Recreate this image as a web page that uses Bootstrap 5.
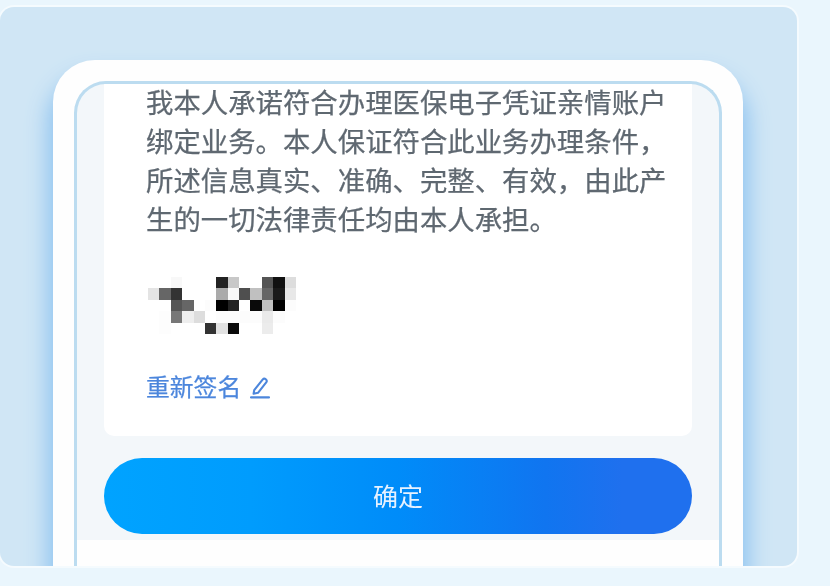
<!DOCTYPE html>
<html lang="zh-CN">
<head>
<meta charset="utf-8">
<title>确认</title>
<link rel="stylesheet" href="https://cdn.jsdelivr.net/npm/bootstrap@5.3.0/dist/css/bootstrap.min.css">
<style>
html,body{height:586px;overflow:hidden}
body{background:#eaf6fd;font-family:"Liberation Sans","Noto Sans CJK SC",sans-serif}
.stage{width:797px;height:559px;margin-top:7px;padding:53px 0 0 53px;background:#d0e6f5;border-radius:14px;overflow:hidden;box-shadow:0 0 0 2px rgba(255,255,255,.5)}
.phone{width:690px;height:506px;padding:21px 21px 0;background:#fefefe;border-radius:42px 42px 0 0;box-shadow:0 20px 22px 5px #8ec3f0}
.screen{height:485px;background:#f3f7fa;border:solid #bcdcf0;border-width:3px 3px 0;border-radius:32px 32px 0 0;overflow:hidden}
.sheet{height:352px;margin:0 27px;padding-left:42px;padding-right:21px;border-radius:0 0 10px 10px}
.pledge{font-size:27.4px;line-height:39px;color:#5f6871;margin-bottom:36.5px;filter:blur(.5px);-webkit-text-stroke:.25px #5f6871}
.sign-pad{display:block;width:148px;height:57px;margin:0 0 37px 2px}
.redo{font-size:23.8px;line-height:34px;color:#4c86dc;gap:9px;filter:blur(.45px);-webkit-text-stroke:.25px #4c86dc}
.ok-btn{height:76px;padding-top:10px;font-size:25px;color:#e6f2ff;border:0;background:linear-gradient(90deg,#00a3ff 0%,#009cfd 25%,#008cf9 50%,#1075f0 75%,#1f70ee 88%)}
.ok-btn:hover{color:#e6f2ff;background:linear-gradient(90deg,#00a3ff 0%,#009cfd 25%,#008cf9 50%,#1075f0 75%,#1f70ee 88%)}
.ok-label{display:block;filter:blur(.45px)}
.actions{padding:22px 27px 6px}
.foot{height:26px;background:#fefefe}
</style>
</head>
<body>
<div class="stage">
  <div class="phone">
    <div class="screen d-flex flex-column">
      <div class="sheet bg-white flex-shrink-0">
        <p class="pledge">我本人承诺符合办理医保电子凭证亲情账户绑定业务。本人保证符合此业务办理条件，所述信息真实、准确、完整、有效，由此产生的一切法律责任均由本人承担。</p>
        <svg class="sign-pad" viewBox="0 0 13 5" shape-rendering="crispEdges" aria-label="签名">
          <rect x="2" y="0" width="1" height="1" fill="#f8f8f8"/><rect x="6" y="0" width="1" height="1" fill="#222"/><rect x="7" y="0" width="1" height="1" fill="#c8c8c8"/><rect x="10" y="0" width="1" height="1" fill="#555"/><rect x="11" y="0" width="1" height="1" fill="#111"/><rect x="12" y="0" width="1" height="1" fill="#ddd"/>
          <rect x="0" y="1" width="1" height="1" fill="#e4e4e4"/><rect x="1" y="1" width="1" height="1" fill="#666"/><rect x="2" y="1" width="1" height="1" fill="#333"/><rect x="6" y="1" width="1" height="1" fill="#aaa"/><rect x="7" y="1" width="1" height="1" fill="#f8f8f8"/><rect x="8" y="1" width="1" height="1" fill="#4f4f4f"/><rect x="9" y="1" width="1" height="1" fill="#c0c0c0"/><rect x="10" y="1" width="1" height="1" fill="#666"/><rect x="11" y="1" width="1" height="1" fill="#1a1a1a"/><rect x="12" y="1" width="1" height="1" fill="#e8e8e8"/>
          <rect x="2" y="2" width="1" height="1" fill="#555"/><rect x="3" y="2" width="1" height="1" fill="#666"/><rect x="5" y="2" width="1" height="1" fill="#fcfcfc"/><rect x="6" y="2" width="1" height="1" fill="#000"/><rect x="7" y="2" width="1" height="1" fill="#222"/><rect x="9" y="2" width="1" height="1" fill="#0a0a0a"/><rect x="10" y="2" width="1" height="1" fill="#c0c0c0"/><rect x="11" y="2" width="1" height="1" fill="#000"/><rect x="12" y="2" width="1" height="1" fill="#fcfcfc"/>
          <rect x="1" y="3" width="1" height="1" fill="#fdfdfd"/><rect x="2" y="3" width="1" height="1" fill="#777"/><rect x="3" y="3" width="1" height="1" fill="#eee"/><rect x="4" y="3" width="1" height="1" fill="#ddd"/><rect x="6" y="3" width="4" height="1" fill="#fcfcfc"/><rect x="10" y="3" width="1" height="1" fill="#eaeaea"/><rect x="11" y="3" width="1" height="1" fill="#fcfcfc"/>
          <rect x="1" y="4" width="1" height="1" fill="#fdfdfd"/><rect x="5" y="4" width="1" height="1" fill="#333"/><rect x="6" y="4" width="1" height="1" fill="#e2e2e2"/><rect x="7" y="4" width="1" height="1" fill="#0a0a0a"/><rect x="10" y="4" width="1" height="1" fill="#ececec"/>
        </svg>
        <div class="redo d-flex align-items-center">
          <span>重新签名</span>
          <svg width="20" height="22" viewBox="0 0 20 22" fill="none" stroke="#4c86dc" stroke-width="2.1" stroke-linejoin="round" stroke-linecap="round" aria-hidden="true">
            <path d="M4.2 13.2 12.6 2.6c.9-1 2.2-1.1 3.2-.3 1 .8 1.2 2 .4 3.1L8 15.8l-4.4.9z"/>
            <path d="M1 20.4h18"/>
          </svg>
        </div>
      </div>
      <div class="actions flex-shrink-0">
        <button type="button" class="btn ok-btn w-100 rounded-pill"><span class="ok-label">确定</span></button>
      </div>
      <div class="foot flex-grow-1"></div>
    </div>
  </div>
</div>
<script src="https://cdn.jsdelivr.net/npm/bootstrap@5.3.0/dist/js/bootstrap.bundle.min.js"></script>
</body>
</html>
